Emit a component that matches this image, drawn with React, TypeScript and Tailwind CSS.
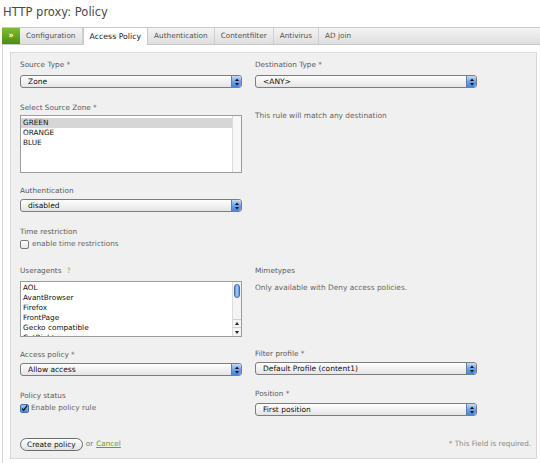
import React from 'react';

const Stepper = () => (
  <span className="flex h-full w-[10px] shrink-0 items-center justify-center rounded-r-[3px] border-l border-[#5b7fb5] bg-gradient-to-b from-[#c4dbf7] via-[#6ea3ea] to-[#3f86e2]">
    <svg width="4" height="8" viewBox="0 0 4 8">
      <polygon points="2,0.5 4,3 0,3" fill="#111" />
      <polygon points="0,5 4,5 2,7.5" fill="#111" />
    </svg>
  </span>
);

const Select = ({ value }: { value: string }) => (
  <div className="flex h-[13px] w-[222px] items-center overflow-hidden rounded-[3px] border border-[#7d7d7d] bg-gradient-to-b from-white to-[#e4e4e4] text-[7.5px] leading-none text-[#111]">
    <span className="flex-1 pl-[7px]">{value}</span>
    <Stepper />
  </div>
);

const Label = ({ children }: { children: React.ReactNode }) => (
  <div className="h-[10px] text-[7.3px] leading-[10px] text-[#5a5a5a]">{children}</div>
);

const Checkbox = ({ checked }: { checked?: boolean }) =>
  checked ? (
    <span className="flex h-[9px] w-[9px] items-center justify-center rounded-[2px] border border-[#3d6fb8] bg-gradient-to-b from-[#9cc3f3] to-[#4b8ee6]">
      <svg width="9" height="9" viewBox="0 0 9 9">
        <path d="M1.5 4.5 L3.5 7 L8 0.5" stroke="#111" strokeWidth="1.6" fill="none" />
      </svg>
    </span>
  ) : (
    <span className="h-[9px] w-[9px] rounded-[2px] border border-[#7a7a7a] bg-gradient-to-b from-white to-[#e8e8e8]" />
  );

const tabs = ['Configuration', 'Access Policy', 'Authentication', 'Contentfilter', 'Antivirus', 'AD join'];

export default function App() {
  return (
    <div className="h-[463px] w-[540px] overflow-hidden bg-white font-['DejaVu_Sans',sans-serif] text-[#333]">
      <h1 className="h-[27px] pl-[3px] pt-[5px] text-[11.5px] font-normal leading-[15px] text-[#4a4a4a]">HTTP proxy: Policy</h1>

      {/* tab bar */}
      <div className="ml-[2px] flex h-[18px] items-stretch border-y border-[#c8c8c8] bg-gradient-to-b from-[#f4f4f4] to-[#dedede] text-[7.3px] text-[#555]">
        <div className="flex w-[18px] items-center justify-center bg-gradient-to-b from-[#7cbf33] to-[#4c8d12] text-[8px] font-bold text-white">
          »
        </div>
        {tabs.map((t) =>
          t === 'Access Policy' ? (
            <div
              key={t}
              className="-mb-[1px] -mt-[1px] flex items-center border-x border-t border-[#c8c8c8] bg-white px-[6px] text-[7.8px] text-[#222]"
            >
              {t}
            </div>
          ) : (
            <div key={t} className="flex items-center border-r border-[#d0d0d0] px-[6px] last:border-r-0">
              {t}
            </div>
          )
        )}
      </div>

      <div className="ml-[2px] h-[418px] border-l border-[#d6d6d6] pl-[7px] pr-[3px] pt-[7px]">
        <div className="h-[407px] border border-[#d8d8d8] bg-[#f0f0f0] pl-[9px] pt-[7px]">
          {/* row 1 */}
          <div className="grid grid-cols-[235px_1fr]">
            <div>
              <Label>Source Type *</Label>
              <div className="mt-[5px]">
                <Select value="Zone" />
              </div>
            </div>
            <div>
              <Label>Destination Type *</Label>
              <div className="mt-[5px]">
                <Select value="<ANY>" />
              </div>
            </div>
          </div>

          {/* row 2 */}
          <div className="mt-[15px] grid grid-cols-[235px_1fr]">
            <div>
              <Label>Select Source Zone *</Label>
              <div className="mt-[2px] flex h-[58px] w-[222px] border border-[#9c9c9c] bg-white text-[7.3px] leading-[10px] text-[#111]">
                <div className="flex-1 pt-[2px]">
                  <div className="bg-[#d6d6d6] pl-[2px]">GREEN</div>
                  <div className="pl-[2px]">ORANGE</div>
                  <div className="pl-[2px]">BLUE</div>
                </div>
                <div className="w-[9px] border-l border-[#dcdcdc] bg-[#f7f7f7]" />
              </div>
            </div>
            <div className="pt-[8px] text-[7.4px] leading-[10px] text-[#666]">This rule will match any destination</div>
          </div>

          {/* row 3 */}
          <div className="mt-[13px]">
            <Label>Authentication</Label>
            <div className="mt-[3px]">
              <Select value="disabled" />
            </div>
          </div>

          {/* row 4 */}
          <div className="mt-[15px]">
            <Label>Time restriction</Label>
            <div className="mt-[2px] flex h-[10px] items-center gap-[3px] text-[7.3px] text-[#666]">
              <Checkbox />
              <span>enable time restrictions</span>
            </div>
          </div>

          {/* row 5 */}
          <div className="mt-[17px] grid grid-cols-[235px_1fr]">
            <div>
              <Label>
                Useragents <span className="ml-[3px] text-[#86b43c]">?</span>
              </Label>
              <div className="mt-[5px] flex h-[56px] w-[222px] overflow-hidden border border-[#9c9c9c] bg-white text-[7.3px] leading-[10px] text-[#111]">
                <div className="flex-1 pl-[2px] pt-[1px]">
                  <div>AOL</div>
                  <div>AvantBrowser</div>
                  <div>Firefox</div>
                  <div>FrontPage</div>
                  <div>Gecko compatible</div>
                  <div>CatRight</div>
                </div>
                <div className="flex w-[9px] flex-col border-l border-[#dcdcdc] bg-[#f4f4f4]">
                  <div className="mx-[1px] mt-[2px] h-[14px] rounded-full border border-[#3a6cb0] bg-gradient-to-r from-[#5d97e4] via-[#a9cbf5] to-[#5d97e4]" />
                  <div className="flex-1" />
                  <div className="flex h-[8px] items-center justify-center border-t border-[#d0d0d0]">
                    <svg width="4" height="3" viewBox="0 0 4 3">
                      <polygon points="2,0 4,3 0,3" fill="#222" />
                    </svg>
                  </div>
                  <div className="flex h-[9px] items-center justify-center border-t border-[#d0d0d0]">
                    <svg width="4" height="3" viewBox="0 0 4 3">
                      <polygon points="0,0 4,0 2,3" fill="#222" />
                    </svg>
                  </div>
                </div>
              </div>
            </div>
            <div>
              <Label>Mimetypes</Label>
              <div className="mt-[7px] text-[7.4px] leading-[10px] text-[#666]">Only available with Deny access policies.</div>
            </div>
          </div>

          {/* row 6 */}
          <div className="mt-[13px] grid grid-cols-[235px_1fr]">
            <div>
              <Label>Access policy *</Label>
              <div className="mt-[3px]">
                <Select value="Allow access" />
              </div>
            </div>
            <div className="-mt-[1px]">
              <Label>Filter profile *</Label>
              <div className="mt-[3px]">
                <Select value="Default Profile (content1)" />
              </div>
            </div>
          </div>

          {/* row 7 */}
          <div className="mt-[15px] grid grid-cols-[235px_1fr]">
            <div>
              <Label>Policy status</Label>
              <div className="mt-[2px] flex h-[10px] items-center gap-[2px] text-[7.3px] text-[#666]">
                <Checkbox checked />
                <span>Enable policy rule</span>
              </div>
            </div>
            <div className="-mt-[2px]">
              <Label>Position *</Label>
              <div className="mt-[4px]">
                <Select value="First position" />
              </div>
            </div>
          </div>

          {/* row 8 */}
          <div className="mt-[22px] flex items-center pr-[5px]">
            <button className="h-[13px] rounded-full border border-[#6b6b6b] bg-gradient-to-b from-white to-[#e2e2e2] px-[6px] text-[7.4px] leading-none text-[#111]">
              Create policy
            </button>
            <span className="ml-[3px] text-[7.3px] text-[#777]">or</span>
            <a className="ml-[3px] text-[7.3px] text-[#6a9e1c] underline">Cancel</a>
            <span className="ml-auto text-[7.2px] text-[#888]">* This Field is required.</span>
          </div>
        </div>
      </div>
    </div>
  );
}
